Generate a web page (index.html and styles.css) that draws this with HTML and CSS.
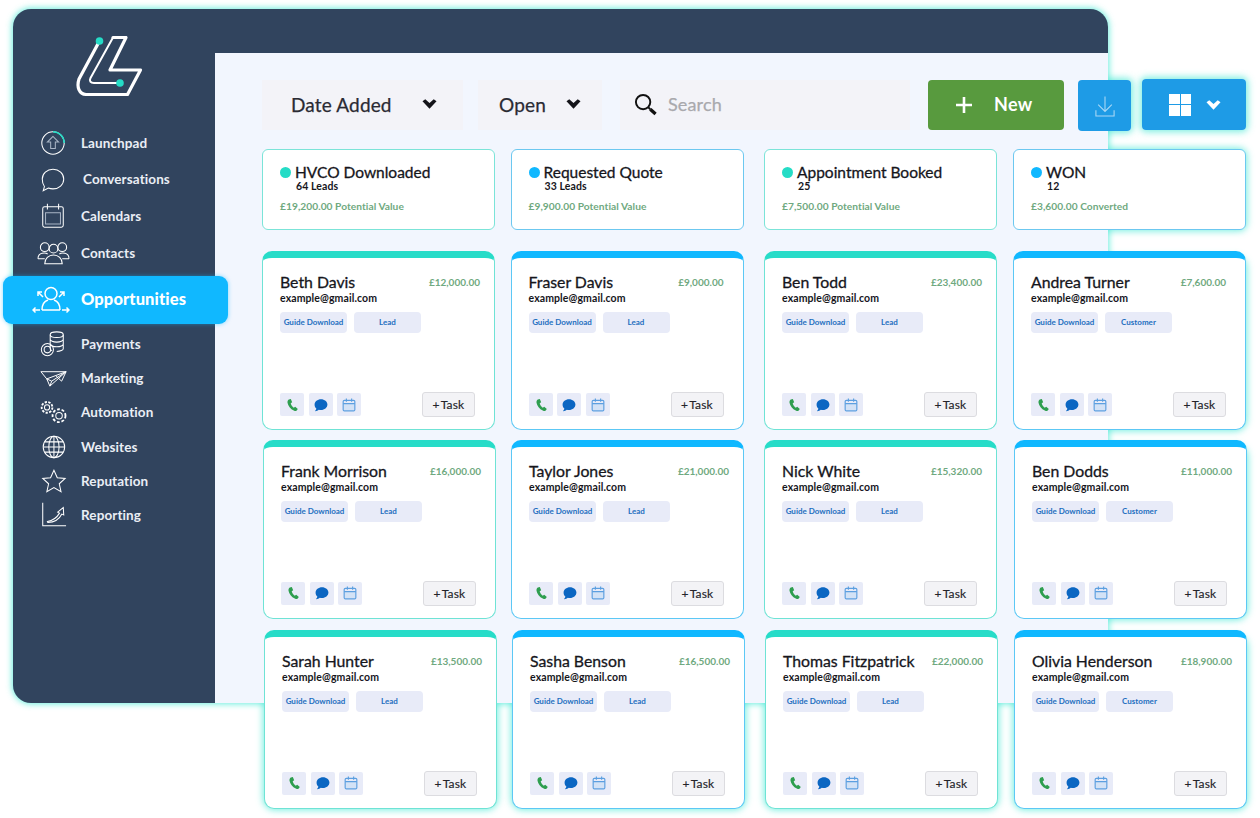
FILE: index.html
```html
<!DOCTYPE html>
<html lang="en">
<head>
<meta charset="utf-8">
<title>Opportunities</title>
<link rel="stylesheet" href="styles.css">
</head>
<body>
<svg class="defs" width="0" height="0" aria-hidden="true">
  <symbol id="i-phone" viewBox="0 0 24 24"><path d="M6.500 2.500 10 1.500l2.300 5.700-2.500 2c.6 3 2.600 5.700 5.200 7.300l2.500-1.700 4.500 4-2.400 3c-1 .7-2.800.5-4.500-.5C9.500 18.800 5.200 13.500 4.300 8c-.3-2.200.7-4.400 2.200-5.500z" fill="#2e9e4f"/></symbol>
  <symbol id="i-chat" viewBox="0 0 24 24"><path d="M12 2c6 0 11 4 11 9.300s-5 9.400-11 9.400c-1.300 0-2.600-.2-3.700-.5C6.800 21.800 4.500 22.500 1.600 22.500c1-1 2.200-2.800 2.400-4.400C2 16.400 1 14 1 11.300 1 6 6 2 12 2z" fill="#0b66c2"/></symbol>
  <symbol id="i-cal" viewBox="0 0 24 24"><rect x="2.500" y="10" width="19" height="11" fill="#d3e2f6"/><g fill="none" stroke="#5c9fe0" stroke-width="2"><rect x="2" y="4" width="20" height="18" rx="2"/><path d="M2 9.500h20M7.500 1v5.500M16.500 1v5.500"/></g></symbol>
</svg>

<div class="frame">
  <aside class="sidebar">
    <svg class="logo" viewBox="0 0 66 60" width="66" height="60" aria-hidden="true">
      <path class="logo-outer" d="M22.500 5 2 43C-.5 51 2 58 9 58.500H50.500L63.500 34H33L49 1.500H36"/>
      <path class="logo-inner" d="M36 1.500 13.500 42c-1.500 3 0 5 3.500 5H43"/>
      <circle class="logo-dot" cx="22.500" cy="5" r="3.800"/>
      <circle class="logo-dot" cx="43" cy="47" r="3.800"/>
    </svg>
    <nav class="nav">
      <a class="nav-item">
        <svg class="nav-icon" viewBox="0 0 30 30"><circle cx="15" cy="15" r="12"/><path class="accent" d="M15 3a12 12 0 0 1 12 12"/><path class="dim" d="M15 8l-6 6h3.500v7h5v-7H21z"/></svg>
        <span>Launchpad</span>
      </a>
      <a class="nav-item nav-conv">
        <svg class="nav-icon" viewBox="0 0 30 30"><path d="M15 3.500c6.500 0 11.500 4.500 11.500 10.500S21.500 24.500 15 24.500c-1.800 0-3.500-.3-5-.9L4.500 26.500l1.300-4.500C4 19.800 3.500 17 3.500 14 3.500 8 8.500 3.500 15 3.500z"/></svg>
        <span>Conversations</span>
      </a>
      <a class="nav-item">
        <svg class="nav-icon" viewBox="0 0 30 30"><rect x="4" y="5" width="22" height="22" rx="2"/><path class="dim wide" d="M7 11.500h16v12H7z"/><path d="M9 2v6M21 2v6"/></svg>
        <span>Calendars</span>
      </a>
      <a class="nav-item">
        <svg class="nav-icon nav-icon-wide" viewBox="0 0 34 24"><circle cx="8" cy="6" r="4.500"/><circle cx="26" cy="6" r="4.500"/><circle cx="17" cy="7.500" r="4.500"/><path d="M1 18c0-4 3-6 6.500-6 1.500 0 2.500.3 3.500 1M33 18c0-4-3-6-6.500-6-1.500 0-2.500.3-3.500 1M1 18h7M33 18h-7M8 23c0-5 4-9 9-9s9 4 9 9z"/></svg>
        <span>Contacts</span>
      </a>
      <a class="nav-item nav-active">
        <svg class="nav-icon nav-icon-big" viewBox="0 0 38 28"><circle cx="19" cy="7.500" r="6"/><path d="M10 24c0-6 3-9 6-10M28 24c0-6-3-9-6-10M10 24h18M1 24h7M3.500 21.500 1 24l2.500 2.500M37 24h-7M34.500 21.500 37 24l-2.500 2.500M11 11 6 6M6 10V6h4M27 11l5-5M32 10V6h-4"/></svg>
        <span>Opportunities</span>
      </a>
      <a class="nav-item nav-small">
        <svg class="nav-icon" viewBox="0 0 30 30"><ellipse cx="19" cy="5" rx="7" ry="3"/><path d="M12 5v15c0 1 1 2 2 2M26 5v15c0 1.500-3 3-7 3M12 10c0 1.500 3 3 7 3s7-1.500 7-3M12 15c0 1.500 3 3 7 3s7-1.500 7-3"/><circle cx="9" cy="21" r="6.500"/><circle cx="9" cy="21" r="3.500"/></svg>
        <span>Payments</span>
      </a>
      <a class="nav-item nav-small">
        <svg class="nav-icon nav-icon-plane" viewBox="0 0 30 20"><path d="M1 3h28L11 19 7.500 11zM7.500 11 29 3 13 13.500zM13 13.500 11 19M18 8l6 5.500L29 3"/></svg>
        <span>Marketing</span>
      </a>
      <a class="nav-item nav-small">
        <svg class="nav-icon nav-icon-wide" viewBox="0 0 30 26"><circle cx="8" cy="8" r="2.800"/><circle class="dash" cx="8" cy="8" r="5.800"/><circle cx="21" cy="17" r="3.500"/><circle class="dash2" cx="21" cy="17" r="7"/></svg>
        <span>Automation</span>
      </a>
      <a class="nav-item nav-small">
        <svg class="nav-icon" viewBox="0 0 30 30"><circle cx="16" cy="15" r="11.500"/><ellipse cx="16" cy="15" rx="5.500" ry="11.500"/><path d="M4.500 15h23M6 9.500h20M6 20.500h20M16 3.500v23"/></svg>
        <span>Websites</span>
      </a>
      <a class="nav-item nav-small">
        <svg class="nav-icon" viewBox="0 0 30 30"><path d="M16 3.500l3.600 8 8.400.8-6.300 5.700 1.900 8.500-7.600-4.500-7.600 4.500 1.900-8.500L4 12.300l8.400-.8z"/></svg>
        <span>Reputation</span>
      </a>
      <a class="nav-item nav-small">
        <svg class="nav-icon" viewBox="0 0 30 30"><path d="M4 2v24.500h25M9 22c6-1 10-4 13-9l-2-1 6-5 .5 8-2-1c-3 6-8 9-15 9z"/></svg>
        <span>Reporting</span>
      </a>
    </nav>
  </aside>

  <main class="main">
    <div class="toolbar">
      <div class="select select-date"><span>Date Added</span><svg class="chev" viewBox="0 0 16 12"><path d="M0.500 3 3.500.8 8 5l4.500-4.200L15.500 3 8 11z"/></svg></div>
      <div class="select select-open"><span>Open</span><svg class="chev" viewBox="0 0 16 12"><path d="M0.500 3 3.500.8 8 5l4.500-4.200L15.500 3 8 11z"/></svg></div>
      <div class="search">
        <svg class="search-icon" viewBox="0 0 24 24"><circle cx="9.500" cy="9.500" r="7.500"/><path class="thin" d="M15 15l2 2"/><path class="handle" d="M17 17l5.500 5"/></svg>
        <span>Search</span>
      </div>
      <button class="btn-new"><svg class="plus" viewBox="0 0 18 18"><path d="M9 1v16M1 9h16"/></svg><span>New</span></button>
      <button class="btn-blue btn-download"><svg class="dl" viewBox="0 0 22 24"><path d="M11 1v16M3.500 10 11 17.500 18.500 10M1 16v6.500h20V16"/></svg></button>
      <button class="btn-blue btn-view">
        <span class="win"><i></i><i></i><i></i><i></i></span>
        <svg class="chev chev-white" viewBox="0 0 16 12"><path d="M0.500 3 3.500.8 8 5l4.500-4.200L15.500 3 8 11z"/></svg>
      </button>
    </div>

    <div class="stats">
      <section class="stat teal"><h2><i class="dot"></i>HVCO Downloaded</h2><p class="leads">64 Leads</p><p class="value">£19,200.00 Potential Value</p></section>
      <section class="stat blue"><h2><i class="dot"></i>Requested Quote</h2><p class="leads">33 Leads</p><p class="value">£9,900.00 Potential Value</p></section>
      <section class="stat teal"><h2><i class="dot"></i>Appointment Booked</h2><p class="leads">25</p><p class="value">£7,500.00 Potential Value</p></section>
      <section class="stat blue"><h2><i class="dot"></i>WON</h2><p class="leads">12</p><p class="value">£3,600.00 Converted</p></section>
    </div>

    <div class="row row-1">
      <article class="card teal"><header><h3>Beth Davis</h3><b>£12,000.00</b></header><p class="mail">example@gmail.com</p><div class="tags"><span>Guide Download</span><span>Lead</span></div><footer><a><svg><use href="#i-phone"/></svg></a><a><svg><use href="#i-chat"/></svg></a><a><svg><use href="#i-cal"/></svg></a><button>+ Task</button></footer></article>
      <article class="card blue"><header><h3>Fraser Davis</h3><b>£9,000.00</b></header><p class="mail">example@gmail.com</p><div class="tags"><span>Guide Download</span><span>Lead</span></div><footer><a><svg><use href="#i-phone"/></svg></a><a><svg><use href="#i-chat"/></svg></a><a><svg><use href="#i-cal"/></svg></a><button>+ Task</button></footer></article>
      <article class="card teal"><header><h3>Ben Todd</h3><b>£23,400.00</b></header><p class="mail">example@gmail.com</p><div class="tags"><span>Guide Download</span><span>Lead</span></div><footer><a><svg><use href="#i-phone"/></svg></a><a><svg><use href="#i-chat"/></svg></a><a><svg><use href="#i-cal"/></svg></a><button>+ Task</button></footer></article>
      <article class="card blue"><header><h3>Andrea Turner</h3><b>£7,600.00</b></header><p class="mail">example@gmail.com</p><div class="tags"><span>Guide Download</span><span>Customer</span></div><footer><a><svg><use href="#i-phone"/></svg></a><a><svg><use href="#i-chat"/></svg></a><a><svg><use href="#i-cal"/></svg></a><button>+ Task</button></footer></article>
    </div>
    <div class="row row-2">
      <article class="card teal"><header><h3>Frank Morrison</h3><b>£16,000.00</b></header><p class="mail">example@gmail.com</p><div class="tags"><span>Guide Download</span><span>Lead</span></div><footer><a><svg><use href="#i-phone"/></svg></a><a><svg><use href="#i-chat"/></svg></a><a><svg><use href="#i-cal"/></svg></a><button>+ Task</button></footer></article>
      <article class="card blue"><header><h3>Taylor Jones</h3><b>£21,000.00</b></header><p class="mail">example@gmail.com</p><div class="tags"><span>Guide Download</span><span>Lead</span></div><footer><a><svg><use href="#i-phone"/></svg></a><a><svg><use href="#i-chat"/></svg></a><a><svg><use href="#i-cal"/></svg></a><button>+ Task</button></footer></article>
      <article class="card teal"><header><h3>Nick White</h3><b>£15,320.00</b></header><p class="mail">example@gmail.com</p><div class="tags"><span>Guide Download</span><span>Lead</span></div><footer><a><svg><use href="#i-phone"/></svg></a><a><svg><use href="#i-chat"/></svg></a><a><svg><use href="#i-cal"/></svg></a><button>+ Task</button></footer></article>
      <article class="card blue"><header><h3>Ben Dodds</h3><b>£11,000.00</b></header><p class="mail">example@gmail.com</p><div class="tags"><span>Guide Download</span><span>Customer</span></div><footer><a><svg><use href="#i-phone"/></svg></a><a><svg><use href="#i-chat"/></svg></a><a><svg><use href="#i-cal"/></svg></a><button>+ Task</button></footer></article>
    </div>
    <div class="row row-3">
      <article class="card teal"><header><h3>Sarah Hunter</h3><b>£13,500.00</b></header><p class="mail">example@gmail.com</p><div class="tags"><span>Guide Download</span><span>Lead</span></div><footer><a><svg><use href="#i-phone"/></svg></a><a><svg><use href="#i-chat"/></svg></a><a><svg><use href="#i-cal"/></svg></a><button>+ Task</button></footer></article>
      <article class="card blue"><header><h3>Sasha Benson</h3><b>£16,500.00</b></header><p class="mail">example@gmail.com</p><div class="tags"><span>Guide Download</span><span>Lead</span></div><footer><a><svg><use href="#i-phone"/></svg></a><a><svg><use href="#i-chat"/></svg></a><a><svg><use href="#i-cal"/></svg></a><button>+ Task</button></footer></article>
      <article class="card teal"><header><h3>Thomas Fitzpatrick</h3><b>£22,000.00</b></header><p class="mail">example@gmail.com</p><div class="tags"><span>Guide Download</span><span>Lead</span></div><footer><a><svg><use href="#i-phone"/></svg></a><a><svg><use href="#i-chat"/></svg></a><a><svg><use href="#i-cal"/></svg></a><button>+ Task</button></footer></article>
      <article class="card blue"><header><h3>Olivia Henderson</h3><b>£18,900.00</b></header><p class="mail">example@gmail.com</p><div class="tags"><span>Guide Download</span><span>Customer</span></div><footer><a><svg><use href="#i-phone"/></svg></a><a><svg><use href="#i-chat"/></svg></a><a><svg><use href="#i-cal"/></svg></a><button>+ Task</button></footer></article>
    </div>
  </main>
</div>
</body>
</html>
```

FILE: styles.css
```css
* { box-sizing: border-box; }
html, body { margin: 0; height: 818px; overflow: hidden; }
body { background: #fff; font-family: "Lato", "Noto Sans", sans-serif; color: #16161c; }
.defs { position: absolute; }
h2, h3, p { margin: 0; }
button { font-family: inherit; border: 0; padding: 0; }

/* frame */
.frame {
  display: flex;
  width: 1095px;
  height: 694px;
  margin: 9px 0 0 13px;
  background: #31445e;
  border-radius: 18px 18px 0 18px;
  box-shadow: 0 0 6px 1px rgba(70, 232, 212, .8);
}
.sidebar { width: 202px; flex: none; }
.logo { display: block; margin: 27px 0 0 64px; overflow: visible; fill: none; stroke: #fff; stroke-linejoin: round; stroke-linecap: round; }
.logo-outer { stroke-width: 3.200; }
.logo-inner { stroke-width: 2; }
.logo-dot { fill: #25dcc6; stroke: none; }

.nav { margin-top: 29px; display: flex; flex-direction: column; }
.nav-item {
  display: flex;
  align-items: center;
  height: 36.500px;
  padding-left: 68px;
  position: relative;
  color: #eaeef5;
  font-size: 13.500px;
  font-weight: 700;
  letter-spacing: .1px;
}
.nav-conv { padding: 0 0 1px 70px; }
.nav-small { height: 34.200px; }
.nav-active + .nav-small { margin-top: 3px; }
.nav-active {
  height: 48px;
  margin: 5px -13px 0 -10px;
  padding: 0 0 2px 78px;
  background: #10b8ff;
  border-radius: 9px;
  color: #fff;
  font-size: 16.500px;
  font-weight: 900;
  box-shadow: 0 0 4px rgba(16, 184, 255, .5);
}
.nav-icon {
  position: absolute;
  left: 26px;
  top: 50%;
  width: 28px;
  height: 28px;
  transform: translateY(-50%);
  fill: none;
  stroke: #fff;
  stroke-width: 1.100;
}
.nav-icon-wide { left: 24px; width: 33px; height: 24px; }
.nav-icon-plane { left: 27px; width: 27px; height: 18px; }
.nav-icon-big { left: 29px; width: 38px; height: 28px; stroke-width: 1.500; }
.accent { stroke: #25dcc6; stroke-width: 1.600; }
.dim { stroke: #a9b5c6; }
.dash { stroke-dasharray: 2.500 1.500; stroke-width: 2; }
.dash2 { stroke-dasharray: 3 2; stroke-width: 2; }

/* main */
.main {
  flex: 1;
  margin-top: 44px;
  padding: 27px 0 0 47px;
  background: #f2f6fe;
  min-width: 0;
}
.toolbar { display: flex; width: 984px; height: 50px; }
.select, .search {
  display: flex;
  align-items: center;
  height: 50px;
  padding-bottom: 2px;
  background: #f3f3f8;
  font-size: 19px;
  letter-spacing: .15px;
  color: #2a2a33;
  -webkit-text-stroke: .25px currentColor;
}
.select-date { width: 201px; padding-left: 29px; }
.select-date .chev { margin-left: 30px; }
.select-open { width: 124px; margin-left: 15px; padding-left: 21px; }
.select-open .chev { margin-left: 20px; }
.chev { width: 15px; height: 12px; fill: #14141a; }
.search { width: 290px; margin-left: 18px; padding-left: 14px; color: #a9a9ad; font-size: 18px; }
.search-icon { width: 23px; height: 23px; margin-right: 11px; fill: none; stroke: #111; stroke-width: 2; }
.search-icon .handle { stroke-width: 3.500; }
.btn-new {
  display: flex;
  align-items: center;
  width: 136px;
  height: 50px;
  margin-left: 18px;
  padding: 0 0 2px 27px;
  background: #589a3e;
  border-radius: 4px;
  color: #fff;
  font-size: 18px;
  font-weight: 700;
  letter-spacing: .3px;
}
.plus { width: 18px; height: 18px; margin: 2px 21px 0 0; fill: none; stroke: #fff; stroke-width: 2.600; }
.btn-blue { position: relative; display: flex; align-items: center; height: 51px; background: #1e9be6; border-radius: 4px; }
.btn-blue::before {
  content: "";
  position: absolute;
  inset: 0;
  z-index: -1;
  border-radius: 4px;
  box-shadow: 0 0 7px 2px rgba(70, 232, 212, .7);
}
.btn-download { width: 53px; margin-left: 14px; justify-content: center; }
.dl { width: 20px; height: 23px; margin-top: 2px; fill: none; stroke: #a9d8f5; stroke-width: 1.200; }
.btn-view { width: 104px; margin: -1px 0 0 11px; padding-left: 27px; }
.win { display: grid; grid-template-columns: 10.500px 10.500px; grid-auto-rows: 10.500px; gap: 1px; width: 22px; }
.win i { background: #fff; }
.chev-white { margin-left: 15px; fill: #fff; }

/* stat cards */
.stats { display: grid; grid-template-columns: 248.500px 253.500px 249px 233px; margin-top: 19px; width: 984px; }
.stat {
  width: 233px;
  height: 81px;
  padding: 13px 16px 0 17px;
  position: relative;
  background: #fff;
  border: 1px solid;
  border-radius: 6px;
}
.stat::before, .card::before {
  content: "";
  position: absolute;
  inset: 0;
  z-index: -1;
  border-radius: inherit;
  box-shadow: 0 0 7px 2px rgba(70, 232, 212, .75);
}
.stat.teal { border-color: #7be4d8; }
.stat.blue { border-color: #6cc8f0; }
.stat h2 { display: flex; align-items: center; font-size: 15.500px; line-height: 18px; font-weight: 400; -webkit-text-stroke: .3px currentColor; }
.dot { width: 11px; height: 11px; margin-right: 4px; border-radius: 50%; }
.teal .dot { background: #25dcc6; }
.blue .dot { background: #10b8ff; }
.leads { margin-left: 16px; font-size: 10.500px; line-height: 11px; font-weight: 700; letter-spacing: .1px; }
.value { margin: 7px 0 0; font-size: 10.200px; line-height: 14px; font-weight: 700; letter-spacing: .05px; color: #6fa980; }

/* lead cards */
.row { display: grid; width: 986px; }
.row-1 { grid-template-columns: 248.500px 253.500px 249px 233px; margin-top: 21px; }
.row-1 .blue b { margin-right: 5px; }
.row-2 { grid-template-columns: 248px 253px 250px 233px; margin: 9.500px 0 0 1px; }
.row-3 { grid-template-columns: 248px 253px 249px 233px; margin: 11px 0 0 2px; }
.card {
  position: relative;
  display: flex;
  flex-direction: column;
  width: 233px;
  height: 179px;
  padding: 14px 14px 12px 17px;
  background: #fff;
  border: 1px solid;
  border-top-width: 7px;
  border-radius: 10px;
}
.card.teal { border-color: #6fe3d5; border-top-color: #27dcc8; }
.card.blue { border-color: #5cc8f5; border-top-color: #10b8ff; }
.card header { display: flex; justify-content: space-between; align-items: center; }
.card h3 { font-size: 15.800px; line-height: 20px; font-weight: 400; -webkit-text-stroke: .3px currentColor; }
.card b { font-size: 10px; font-weight: 700; color: #6fa980; }
.mail { margin-top: -1px; font-size: 10.500px; line-height: 14px; font-weight: 700; letter-spacing: .1px; }
.tags { display: flex; gap: 7px; margin-top: 7px; }
.tags span {
  width: 67px;
  height: 21px;
  display: flex;
  align-items: center;
  justify-content: center;
  padding-bottom: 1px;
  background: #e8ebf8;
  border-radius: 4px;
  font-size: 8px;
  font-weight: 700;
  color: #1e6fc0;
  white-space: nowrap;
}
.card footer { display: flex; align-items: center; gap: 4.500px; margin-top: auto; }
.card footer a {
  display: flex;
  align-items: center;
  justify-content: center;
  width: 24px;
  height: 23px;
  background: #e8ebf8;
  border-radius: 2px;
}
.card footer svg { width: 14px; height: 14px; }
.card footer button {
  width: 53px;
  height: 25px;
  margin: 0 5px 0 auto;
  background: #f3f3f6;
  border: 1px solid #dcdce0;
  border-radius: 3px;
  font-size: 12px;
  word-spacing: -2px;
  letter-spacing: .2px;
  color: #24242a;
  -webkit-text-stroke: .15px currentColor;
}
```
